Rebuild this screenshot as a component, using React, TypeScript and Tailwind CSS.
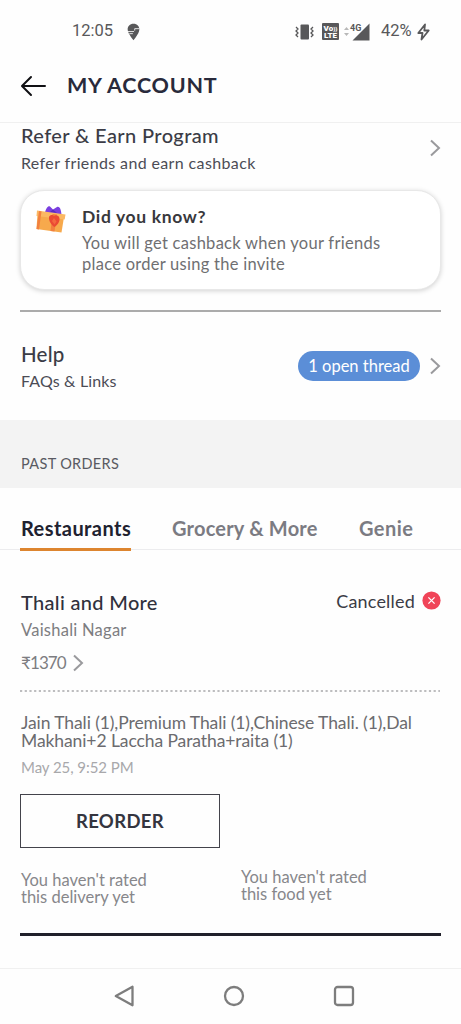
import React from "react";

function Chevron({ className = "" }: { className?: string }) {
  return (
    <svg className={className} width="12" height="18" viewBox="0 0 12 18" fill="none" stroke="#9a9a9d" strokeWidth="2">
      <path d="M2 1.500 10 9l-8 7.500" />
    </svg>
  );
}

function StatusBar() {
  return (
    <div className="flex h-[62px] items-center pt-[1px] text-[#58585a]">
      <span className="ml-[72px] w-[42px] font-[Roboto] text-[16.5px]">12:05</span>
      <svg className="ml-[13px]" width="13" height="18" viewBox="0 0 14 19">
        <path fill="#58585a" d="M7 .5C3 .5.7 3.300.7 6.600c0 3.900 3.600 8.200 6.300 11.900 2.700-3.700 6.300-8 6.300-11.900C13.300 3.300 11 .5 7 .5Z" />
        <path fill="none" stroke="#fff" strokeWidth="0.900" d="M13.300 5.900H8.300V8M.8 9h6.800M6.300 11.300H2.500" />
      </svg>
      <svg className="ml-[155px]" width="19" height="18" viewBox="0 0 19 18">
        <rect x="5.500" y="1.500" width="8.500" height="15" rx="1" fill="#58585a" />
        <path fill="none" stroke="#58585a" strokeWidth="1.300" d="m1 4 2 2-2 2 2 2-2 2 2 2M18 4l-2 2 2 2-2 2 2 2-2 2" />
      </svg>
      <div className="ml-[8px] flex h-[17px] w-[17px] flex-col items-center justify-center rounded-[1px] bg-[#58585a] font-[Roboto] text-[8px] leading-[7px] font-black text-white">
        <span>Vo<span className="text-[6px]">))</span></span>
        <span>LTE</span>
      </div>
      <svg className="ml-[5px]" width="27" height="20" viewBox="0 0 27 20">
        <path fill="#b8b8b8" d="m0 8 2.500-3L5 8ZM0 11l2.500 3L5 11Z" />
        <path fill="#58585a" d="M25.500 1.500v17H8.500Z" />
        <text x="6" y="8.500" fontFamily="Roboto" fontSize="9" fontWeight="700" fill="#58585a" stroke="#fff" strokeWidth="1.500" paintOrder="stroke">4G</text>
      </svg>
      <span className="ml-[10px] w-[32px] font-[Roboto] text-[16.500px]">42%</span>
      <svg className="ml-[4px]" width="13" height="18" viewBox="0 0 13 18" fill="none" stroke="#58585a" strokeWidth="1.800" strokeLinejoin="round">
        <path d="M8 1.500 1.300 10H5.500L4.500 16.500 11.700 7.500H7.300Z" />
      </svg>
    </div>
  );
}

function Gift() {
  return (
    <svg width="32" height="30" viewBox="0 0 32 30">
      <path fill="#7a3fe0" d="M10 7.500c1-4 3-7 5-6l3 3 4-2.500c3-1 4 3 4.500 7.500Z" />
      <path fill="#5a2cc0" d="m15 7 3-2.500 4 3.500Z" />
      <path fill="#f7a94c" d="m2.500 9 26.500 3-2.500 15.500L1.500 24Z" />
      <path fill="#fbb863" d="m2 5.500 28.500 4-.8 5L1.500 11Z" />
      <path fill="#f2803f" d="m4 6 2.500.4L4 24.400l-2.500-.4ZM17.500 9l4.500.6-2.500 17-4-.5Z" />
      <path fill="#ea4a34" d="M14 12c1.500-3 4-2 5-1 2-1.500 5-.5 5.500 2.500s-2 6.500-5 8.500c-3-2-6-6-5.500-10Z" />
      <path fill="#f3683f" d="m17 16 2-3 2.500 3.500-2 3Z" />
    </svg>
  );
}

function ReferSection() {
  return (
    <section className="h-[188px] px-[20px] pt-[2px]">
      <div className="flex justify-between">
        <div className="pl-px text-[#3b3c46]">
          <h2 className="text-[20px] leading-[20px] font-medium tracking-[0.38px]">Refer &amp; Earn Program</h2>
          <p className="mt-[8px] text-[16px] leading-[20px] tracking-[0.37px] text-[#4b4c55]">Refer friends and earn cashback</p>
        </div>
        <Chevron className="mt-[14px]" />
      </div>
      <div className="mt-[17px] flex h-[100px] rounded-[24px] border border-[#e8e8e8] bg-white pt-[14px] pl-[14px] shadow-[0_1px_5px_rgba(0,0,0,0.18)]">
        <Gift />
        <div className="ml-[15px]">
          <h3 className="text-[17.5px] leading-[24px] font-bold tracking-[0.65px] text-[#38383c]">Did you know?</h3>
          <p className="mt-[4px] text-[16.5px] leading-[20.500px] tracking-[0.27px] text-[#6f6f72]">
            You will get cashback when your friends<br />place order using the invite
          </p>
        </div>
      </div>
      <div className="mt-[20px] h-[1.500px] bg-[#ababab]" />
    </section>
  );
}

function HelpSection() {
  return (
    <section className="flex h-[109px] px-[20px] pt-[32px]">
      <div className="flex-1 pl-px text-[#3b3c46]">
        <h2 className="text-[20.5px] leading-[22px] font-medium tracking-[0.2px]">Help</h2>
        <p className="mt-[6px] text-[16px] leading-[20px] tracking-[0.15px] text-[#4b4c55]">FAQs &amp; Links</p>
      </div>
      <div className="mt-[8px] flex h-[30px] w-[122px] items-center justify-center rounded-full bg-[#5b8ed7] pt-px text-[16.500px] text-white">
        1 open thread
      </div>
      <Chevron className="mt-[14px] ml-[9px]" />
    </section>
  );
}

function Tabs() {
  return (
    <nav className="flex h-[62px] border-b-[1.500px] border-[#ececee] pl-[20px] text-[20px] font-bold whitespace-nowrap text-[#7b7b82]">
      <div className="-mb-[2px] flex h-[63px] w-[111px] items-center border-b-[3px] border-[#dd852f] pt-[20px] pl-px tracking-[0.43px] text-[#20212f]">Restaurants</div>
      <div className="ml-[41px] flex h-[60px] w-[146px] items-center pt-[20px] tracking-[0.2px]">Grocery &amp; More</div>
      <div className="ml-[41px] flex h-[60px] items-center pt-[20px] tracking-[0.45px]">Genie</div>
    </nav>
  );
}

function Order() {
  return (
    <section className="px-[20px] pt-[40px]">
      <div className="flex h-[24px] items-start justify-between">
        <h2 className="pl-px text-[20px] leading-[24px] font-medium tracking-[0.32px] text-[#30313c]">Thali and More</h2>
        <div className="flex items-center">
          <span className="pt-px text-[18px] leading-[20px] tracking-[0.2px] text-[#3b3c46]">Cancelled</span>
          <svg className="ml-[7px]" width="19" height="19" viewBox="0 0 19 19">
            <circle cx="9.500" cy="9.500" r="9.100" fill="#f04458" />
            <path d="m6.400 6.400 6.200 6.200m0-6.200-6.200 6.200" stroke="#fff" strokeWidth="1.300" />
          </svg>
        </div>
      </div>
      <p className="mt-[6px] pl-px text-[16.5px] leading-[20px] tracking-[0.25px] text-[#7d7d81]">Vaishali Nagar</p>
      <div className="mt-[13px] flex h-[20px] items-center pl-px text-[17px] text-[#7d7d81]">
        <span className="w-[51px] tracking-[-0.9px]">₹1370</span>
        <Chevron />
      </div>
      <svg className="mt-[16px] block" width="420" height="4" viewBox="0 0 420 4">
        <path d="M0 2h420" stroke="#bdbdbf" strokeWidth="1.800" strokeDasharray="2.200 2.500" />
      </svg>
      <p className="mt-[21px] pl-px text-[17.500px] leading-[18px] tracking-[-0.09px] whitespace-nowrap text-[#6b6b6f]">
        <span className="block">Jain Thali (1),Premium Thali (1),Chinese Thali. (1),Dal</span>
        <span className="block">Makhani+2 Laccha Paratha+raita (1)</span>
      </p>
      <p className="mt-[7px] pl-px text-[15px] leading-[20px] tracking-[-0.06px] text-[#a8a8ab]">May 25, 9:52 PM</p>
      <button className="mt-[17px] flex h-[54px] w-[200px] items-center justify-center border-[1.500px] border-[#43434b] pt-px text-[18.5px] font-bold tracking-[0.35px] text-[#34353f]">REORDER</button>
      <div className="mt-[21px] flex pl-px text-[16.500px] leading-[16.500px] text-[#87878b]">
        <p className="mt-[3px] w-[220px]">You haven't rated<br />this delivery yet</p>
        <p>You haven't rated<br />this food yet</p>
      </div>
      <div className="mt-[28px] h-[2.500px] bg-[#20202a]" />
    </section>
  );
}

export default function App() {
  return (
    <div className="flex h-[1024px] w-[461px] flex-col overflow-hidden bg-[#fefefe] font-['Lato','Noto_Sans',sans-serif]">
      <StatusBar />
      <header className="flex h-[61px] items-center border-b border-[#f0f0f0] pl-[20px]">
        <svg className="-mt-[12px]" width="27" height="22" viewBox="0 0 27 22" fill="none" stroke="#111114" strokeWidth="2" strokeLinecap="round" strokeLinejoin="round">
          <path d="M11 2 2 11l9 9M2.500 11H25" />
        </svg>
        <h1 className="-mt-[13px] ml-[20px] text-[21.500px] font-bold tracking-[0.75px] text-[#292a3b]">MY ACCOUNT</h1>
      </header>
      <ReferSection />
      <HelpSection />
      <div className="h-[68px] bg-[#f3f3f3] pt-[34px] pl-[21px] text-[14.500px] leading-[20px] tracking-[0.33px] text-[#595a62]">PAST ORDERS</div>
      <Tabs />
      <Order />
      <footer className="mt-auto flex h-[56px] items-center border-t border-[#f0f0f0] pb-px text-[#7d7d7d]">
        <svg className="ml-[113px]" width="22" height="24" viewBox="0 0 22 24" fill="none" stroke="currentColor" strokeWidth="2.300" strokeLinejoin="round"><path d="M19.500 2.700v18.600L2.800 12Z" /></svg>
        <svg className="ml-[87px]" width="24" height="24" viewBox="0 0 24 24" fill="none" stroke="currentColor" strokeWidth="2.300"><circle cx="12" cy="12" r="9" /></svg>
        <svg className="ml-[86px]" width="24" height="24" viewBox="0 0 24 24" fill="none" stroke="currentColor" strokeWidth="2.300"><rect x="3" y="3" width="18" height="18" rx="2.500" /></svg>
      </footer>
    </div>
  );
}
